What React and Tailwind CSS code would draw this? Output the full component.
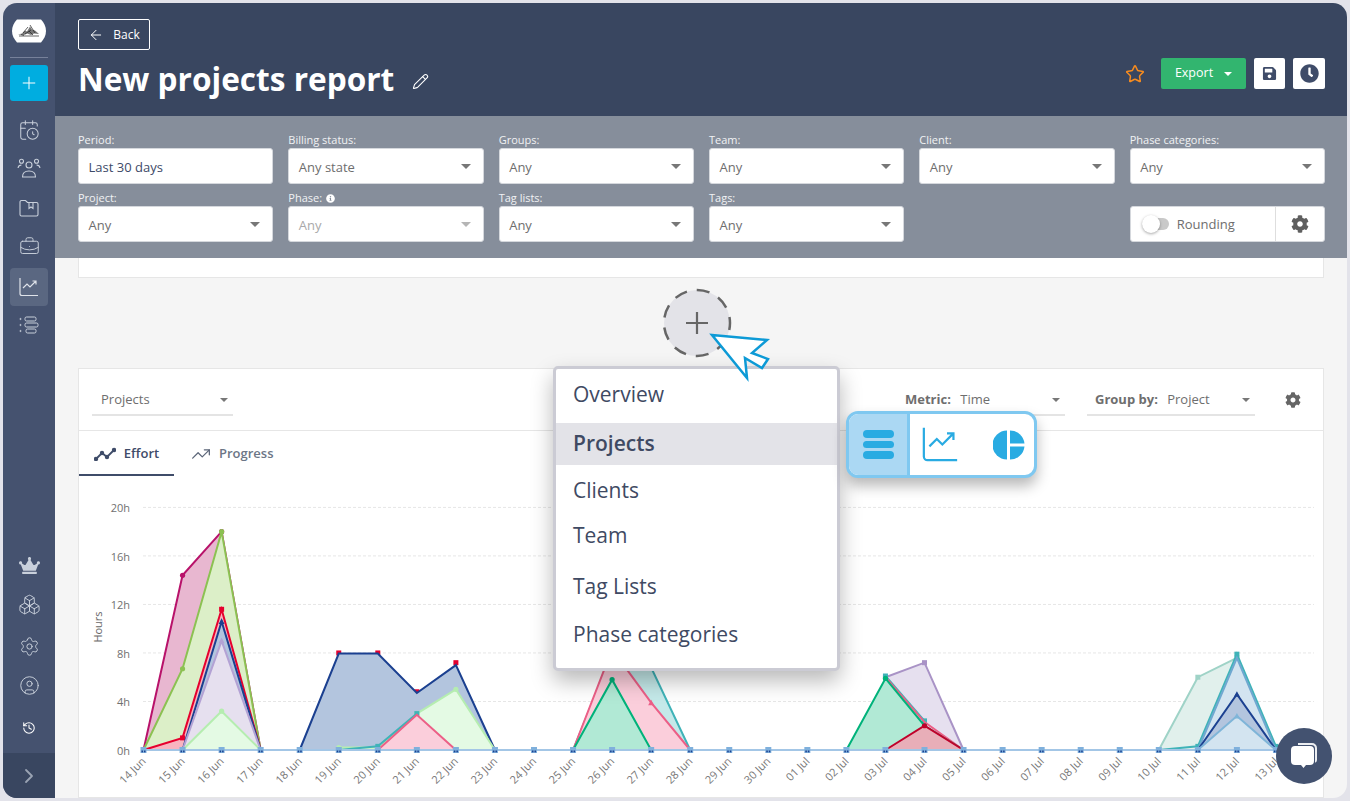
import React from "react";
import {
  ArrowLeft, Plus, Pencil, Star, CalendarClock, BriefcaseBusiness, Boxes, Settings,
  CircleUser, History, ChevronRight, TrendingUp,
} from "lucide-react";
import { FaCog, FaSave, FaClock, FaCrown, FaInfoCircle } from "react-icons/fa";

const dates = [
  "14 Jun", "15 Jun", "16 Jun", "17 Jun", "18 Jun", "19 Jun", "20 Jun", "21 Jun", "22 Jun", "23 Jun",
  "24 Jun", "25 Jun", "26 Jun", "27 Jun", "28 Jun", "29 Jun", "30 Jun", "01 Jul", "02 Jul", "03 Jul",
  "04 Jul", "05 Jul", "06 Jul", "07 Jul", "08 Jul", "09 Jul", "10 Jul", "11 Jul", "12 Jul", "13 Jul",
];

const X = (i) => 143.5 + 39.05 * i;
const Y = (h) => 750 - 12.13 * h;

// line colour, fill, marker, [[day index, hours], ...], marker colour if not the line's
const series = [
  ["#b8126a", "#e8b7d0", "circle", [[0, 0], [1, 14.4], [2, 18], [3, 0]]],
  ["#8cc152", "#dcefc8", "circle", [[0, 0], [1, 6.7], [2, 18], [3, 0]]],
  ["#e6002e", "#f9b5c0", "square", [[0, 0], [1, 1], [2, 11.6], [3, 0]]],
  ["#1b4090", "#b3c5de", "tri", [[1, 0], [2, 10.6], [3, 0]]],
  ["#b3a2d4", "#e6e0ef", "tri", [[1, 0], [2, 9], [3, 0]]],
  ["#b5edb0", "#e4fae4", "circle", [[1, 0], [2, 3.2], [3, 0]]],

  ["none", "none", "square", [[5, 8], [6, 8], [7, 4.8], [8, 7.2]], "#e6002e"],
  ["#1b4090", "#b3c5de", "none", [[4, 0], [5, 7.95], [6, 7.95], [7, 4.7], [8, 7], [9, 0]]],
  ["#b5edb0", "#e4fae4", "circle", [[5, 0.2], [6, 0.2], [7, 3], [8, 5], [9, 0]]],
  ["#3fb3b8", "none", "square", [[5, 0], [6, 0.3], [7, 3]]],
  ["#ec5f87", "#fbcedb", "none", [[6, 0], [7, 2.9], [8, 0]]],

  ["#3fb3b8", "#c4e9e9", "none", [[11, 0], [12, 8], [13, 6.8], [14, 0]]],
  ["#ec5f87", "#fbcedb", "tri", [[11, 0], [12, 8.3], [13, 3.9], [14, 0]]],
  ["#00b27a", "#b1e9d5", "circle", [[11, 0], [12, 5.8], [13, 0]]],

  ["#a993c6", "#e6e0ef", "square", [[19, 6], [20, 7.2], [21, 0]]],
  ["#3fb3b8", "none", "square", [[19, 6.1], [20, 2.4]]],
  ["#ec5f87", "none", "none", [[19, 6], [20, 2.3], [21, 0]]],
  ["#00b27a", "#b1e9d5", "circle", [[18, 0], [19, 5.9], [20, 2], [21, 0]]],
  ["#c0002a", "#e8aeb8", "circle", [[19, 0], [20, 2], [21, 0]]],

  ["#9fd3c7", "#e1f0ec", "square", [[26, 0], [27, 6], [28, 7.6], [29, 0]]],
  ["#3fb3b8", "none", "square", [[26, 0], [27, 0.3], [28, 7.9], [29, 0.3]]],
  ["#6fa8d0", "#d3e4f0", "none", [[27, 0], [28, 7.6], [29, 0]]],
  ["#1b4090", "#b3c5de", "tri", [[27, 0], [28, 4.6], [29, 0]]],
  ["#7fb5d8", "#d3e4f0", "tri", [[27, 0], [28, 2.8], [29, 0]]],
];

const Marker = ({ type, x, y, color }) => {
  if (type === "circle") return <circle cx={x} cy={y} r="2.6" fill={color} />;
  if (type === "square") return <rect x={x - 2.5} y={y - 2.5} width="5" height="5" fill={color} />;
  if (type === "tri") return <path d={`M${x - 3} ${y + 2.5}L${x + 3} ${y + 2.5}L${x} ${y - 3}Z`} fill={color} />;
  return null;
};

const Chart = () => (
  <svg viewBox="79 476 1245 322" className="block w-[1245px] h-[322px]" style={{ fontFamily: "'Open Sans', sans-serif" }}>
    {[0, 4, 8, 12, 16, 20].map((h) => (
      <g key={h}>
        {h > 0 && <line x1="143" x2="1314" y1={Y(h)} y2={Y(h)} stroke="#e6e6e6" strokeDasharray="3 2" />}
        <text x="130" y={Y(h) + 5} textAnchor="end" fontSize="11" fill="#707070">{h}h</text>
      </g>
    ))}
    <text transform="translate(102 627) rotate(-90)" textAnchor="middle" fontSize="11" fill="#666">Hours</text>

    {series.map(([line, fill, marker, pts, markerColor], n) => {
      const d = pts.map(([i, h]) => `${X(i)},${Y(h)}`).join(" ");
      const first = pts[0][0];
      const last = pts[pts.length - 1][0];
      return (
        <g key={n}>
          {fill !== "none" && <polygon points={`${X(first)},${Y(0)} ${d} ${X(last)},${Y(0)}`} fill={fill} />}
          <polyline points={d} fill="none" stroke={line} strokeWidth="2" />
          {pts.filter(([, h]) => h > 0).map(([i, h]) => (
            <Marker key={i} type={marker} x={X(i)} y={Y(h)} color={markerColor || line} />
          ))}
        </g>
      );
    })}

    <line x1={X(0)} x2={X(29)} y1="750" y2="750" stroke="#a3c6e6" strokeWidth="2" />
    {dates.map((d, i) => (
      <g key={d}>
        <rect x={X(i) - 3} y="747" width="6" height="6" fill="#7fb0dc" />
        <rect x={X(i) - 2} y="750.5" width="1.5" height="1.8" fill="#1b4090" />
        <rect x={X(i) + 0.5} y="750.5" width="1.5" height="1.8" fill="#1b4090" />
        <text transform={`translate(${X(i) + 3} 762) rotate(-45)`} textAnchor="end" fontSize="11" fill="#777">{d}</text>
      </g>
    ))}
  </svg>
);

const Caret = ({ className = "border-t-[#777]" }) => (
  <span className={`w-0 h-0 border-x-[5px] border-x-transparent border-t-[5px] ${className}`} />
);

const SmallCaret = () => (
  <span className="w-0 h-0 border-x-[4px] border-x-transparent border-t-[4px] border-t-[#777]" />
);

const Field = ({ label, value, info, disabled, noArrow, blue }) => (
  <div>
    <div className="h-4 text-[11px] leading-4 text-[#f1f2f4] flex items-center gap-1">
      {label}
      {info && <FaInfoCircle className="text-white text-[9px]" />}
    </div>
    <div className="h-9 bg-white rounded-[3px] border border-[#d5d8dd] flex items-center justify-between pl-[9.500px] pr-[12px]">
      <span className={`text-[13px] pt-[3px] ${blue ? "text-[#3d4a68]" : disabled ? "text-[#a9a9a9]" : "text-[#6e6e6e]"}`}>{value}</span>
      {!noArrow && <Caret className={disabled ? "border-t-[#b5b5b5]" : "border-t-[#777]"} />}
    </div>
  </div>
);

const UsersIcon = () => (
  <svg width="24" height="20" viewBox="0 0 24 20" fill="none" stroke="#c9d0db" strokeWidth="1.1">
    <circle cx="12" cy="7" r="3" />
    <circle cx="4.5" cy="3.2" r="2" />
    <circle cx="19.5" cy="3.2" r="2" />
    <path d="M5.5 19c0-4 2.5-6 6.500-6s6.500 2 6.500 6z" />
    <path d="M1 10c.3-2 1.500-3 3.500-3M23 10c-.3-2-1.500-3-3.500-3" />
  </svg>
);

const ProjectsIcon = () => (
  <svg width="20" height="18" viewBox="0 0 20 18" fill="none" stroke="#c9d0db" strokeWidth="1.1">
    <path d="M1 3a1.500 1.500 0 0 1 1.500-1.500h4l2 2h9A1.500 1.500 0 0 1 19 5v10.500a1.500 1.500 0 0 1-1.500 1.500h-15A1.500 1.500 0 0 1 1 15.500z" />
    <path d="M10 3.500v6l2-1.500 2 1.500v-6" />
  </svg>
);

const ReportsIcon = ({ color = "#dfe3ea", size = 20 }) => (
  <svg width={size} height={size} viewBox="0 0 20 20" fill="none" stroke={color} strokeWidth="1.200">
    <path d="M1 1v15.500a2 2 0 0 0 2 2h16" />
    <path d="M4 11l4-4 3 3 6-6M13.500 4H17v3.500" />
  </svg>
);

const PhasesIcon = () => (
  <svg width="20" height="18" viewBox="0 0 20 18" fill="none" stroke="#c9d0db" strokeWidth="1">
    <circle cx="1.500" cy="3" r=".6" />
    <circle cx="1.500" cy="9" r=".6" />
    <circle cx="1.500" cy="15" r=".6" />
    <rect x="6" y="1" width="11" height="4" rx="1.500" />
    <rect x="6" y="7" width="13" height="4" rx="1.500" />
    <rect x="7" y="13" width="10" height="4" rx="1.500" />
  </svg>
);

const Logo = () => (
  <svg width="34" height="24" viewBox="0 0 34 24">
    <path d="M5 0.500h24c3 3 5 7 5 11.500s-2 8-5 11.500H5C2 20 0 16.500 0 12S2 3.500 5 .5z" fill="#fff" />
    <path d="M6 15.500l4-1 3-3 2 1 3-5 2 3 3 1 4 3.500-5-.5-3 1.500-4-1.500-3 1.500z" fill="#777" />
    <path d="M7 17h20M11 14l5-6M18 6l5 8M13 15l6-4M17 12l4 4M9 15.500l3 1" stroke="#222" strokeWidth=".7" fill="none" />
  </svg>
);

const NavItem = ({ children, active }) => (
  <div className={`w-[38px] h-[38px] rounded-[4px] flex items-center justify-center ${active ? "bg-[#5a6781]" : ""}`}>
    {children}
  </div>
);

const Sidebar = () => (
  <aside className="w-[52px] shrink-0 bg-[#45526f] flex flex-col items-center">
    <div className="h-[55px] w-[38px] border-b border-[#77819a] flex items-start justify-center pt-[16px]">
      <Logo />
    </div>
    <div className="mt-[7px] w-[38px] h-[36px] bg-[#00ade0] rounded-[3px] flex items-center justify-center">
      <Plus size={20} strokeWidth={1.2} color="#fff" />
    </div>
    <div className="mt-[10px] flex flex-col">
      <NavItem><CalendarClock size={22} strokeWidth={1.1} color="#c9d0db" /></NavItem>
      <NavItem><UsersIcon /></NavItem>
      <div className="h-[2px]" />
      <NavItem><ProjectsIcon /></NavItem>
      <NavItem><BriefcaseBusiness size={21} strokeWidth={1.1} color="#c9d0db" /></NavItem>
      <div className="h-[3px]" />
      <NavItem active><ReportsIcon /></NavItem>
      <NavItem><PhasesIcon /></NavItem>
    </div>
    <div className="mt-auto flex flex-col items-center">
      <NavItem><FaCrown size={21} color="#c9d0db" /></NavItem>
      <div className="h-[1px]" />
      <NavItem><Boxes size={23} strokeWidth={1} color="#c9d0db" /></NavItem>
      <div className="h-[4px]" />
      <NavItem><Settings size={21} strokeWidth={1.1} color="#c9d0db" /></NavItem>
      <div className="h-[1px]" />
      <NavItem><CircleUser size={21} strokeWidth={1.1} color="#c9d0db" /></NavItem>
      <div className="h-[5px]" />
      <NavItem><History size={14} strokeWidth={1.800} color="#fff" /></NavItem>
      <div className="h-[6px]" />
    </div>
    <div className="w-full h-[45px] bg-[#394660] flex items-center justify-center">
      <ChevronRight size={24} strokeWidth={1.800} color="#9aa3b3" />
    </div>
  </aside>
);

const Header = () => (
  <header className="h-[113px] bg-[#394660] pl-[23px] pr-[22px] pt-[16px] flex justify-between">
    <div>
      <button className="w-[72px] h-[31px] border border-white rounded-[2px] flex items-center justify-center gap-[9px] text-white text-[12px]">
        <ArrowLeft size={16} strokeWidth={1.500} /> Back
      </button>
      <div className="mt-[8px] flex items-center gap-[18px]">
        <h1 className="text-white font-bold text-[31.600px] leading-[42px]">New projects report</h1>
        <Pencil size={17} strokeWidth={1.500} color="#fff" className="mt-[5px]" />
      </div>
    </div>
    <div className="flex items-center gap-2 self-start mt-[39px]">
      <Star size={20} strokeWidth={1.800} color="#f68b1f" className="mr-[8px]" />
      <button className="w-[85px] h-[31px] bg-[#32b56f] rounded-[2px] flex items-center justify-center gap-[11px] text-white text-[12.500px]">
        Export <span className="w-0 h-0 border-x-[4px] border-x-transparent border-t-[4px] border-t-white" />
      </button>
      <button className="w-[31px] h-[31px] bg-white rounded-[2px] flex items-center justify-center">
        <FaSave size={15} color="#3f4c69" />
      </button>
      <button className="w-[32px] h-[31px] bg-white rounded-[2px] flex items-center justify-center">
        <FaClock size={19} color="#3f4c69" />
      </button>
    </div>
  </header>
);

const Filters = () => (
  <section className="h-[142px] bg-[#868e9b] pl-[23px] pr-[22px] pt-[16px] grid grid-cols-6 gap-x-[15px] gap-y-[6px] content-start">
    <Field label="Period:" value="Last 30 days" noArrow blue />
    <Field label="Billing status:" value="Any state" />
    <Field label="Groups:" value="Any" />
    <Field label="Team:" value="Any" />
    <Field label="Client:" value="Any" />
    <Field label="Phase categories:" value="Any" />
    <Field label="Project:" value="Any" />
    <Field label="Phase:" value="Any" info disabled />
    <Field label="Tag lists:" value="Any" />
    <Field label="Tags:" value="Any" />
    <div />
    <div className="pt-4">
      <div className="h-9 bg-white rounded-[3px] border border-[#d5d8dd] flex items-center">
        <div className="flex-1 flex items-center pl-[11px] gap-[8px] h-full">
          <div className="relative w-[27px] h-[12px] bg-[#c9c9c9] rounded-full">
            <div className="absolute left-0 top-[-3px] w-[18px] h-[18px] bg-white rounded-full shadow-[0_1px_3px_rgba(0,0,0,0.35)]" />
          </div>
          <span className="text-[13px] text-[#6e6e6e] pt-[1px]">Rounding</span>
        </div>
        <div className="w-[49px] h-full border-l border-[#dedede] flex items-center justify-center">
          <FaCog size={18} color="#5f5f5f" />
        </div>
      </div>
    </div>
  </section>
);

const Underlined = ({ className, children }) => (
  <div className={`h-[30px] border-b-2 border-[#e4e4e4] flex items-center justify-between text-[13px] text-[#6e6e6e] ${className}`}>
    {children}
  </div>
);

const ReportCard = () => (
  <div className="mx-[23px] mt-[10px] bg-white border border-[#e6e6e6] flex-1 min-h-0 overflow-hidden">
    <div className="h-[62px] border-b border-[#e6e6e6] flex items-center pl-[13px] pr-[22px]">
      <Underlined className="w-[141px] pl-[9px] pr-[5px] mt-[2px]">
        <span className="pt-[1px]">Projects</span> <SmallCaret />
      </Underlined>
      <Underlined className="w-[168px] ml-auto pl-[8px] pr-[5px] mt-[2px]">
        <span><b className="font-bold mr-[6px]">Metric:</b> Time</span> <SmallCaret />
      </Underlined>
      <Underlined className="w-[168px] ml-[22px] pl-[8px] pr-[5px] mt-[2px]">
        <span><b className="font-bold mr-[6px]">Group by:</b> Project</span> <SmallCaret />
      </Underlined>
      <FaCog size={16} color="#666" className="ml-[30px]" />
    </div>
    <div className="h-[45px] flex">
      <div className="w-[95px] pt-[3px] border-b-2 border-[#3f4c69] flex items-center justify-center gap-[8px] text-[13px] font-semibold text-[#3f4c69]">
        <svg width="22" height="14" viewBox="0 0 22 14" fill="none" stroke="#3f4c69" strokeWidth="1.800">
          <path d="M2 12l6-6 5 4 7-7" />
          <circle cx="2" cy="12" r="1.300" fill="#3f4c69" />
          <circle cx="8" cy="6" r="1.300" fill="#3f4c69" />
          <circle cx="13" cy="10" r="1.300" fill="#3f4c69" />
          <circle cx="20" cy="3" r="1.300" fill="#3f4c69" />
        </svg>
        Effort
      </div>
      <div className="ml-[17px] pt-[1px] flex items-center gap-[8px] text-[13px] font-semibold text-[#6c7686]">
        <TrendingUp size={20} strokeWidth={1.500} color="#5b6578" />
        Progress
      </div>
    </div>
    <Chart />
  </div>
);

const menuItems = [
  ["Overview", "h-[54px] pb-[2px]"],
  ["Projects", "h-[42px] bg-[#e3e3e8] font-semibold"],
  ["Clients", "h-[50px] pt-[2px]"],
  ["Team", "h-[42px]"],
  ["Tag Lists", "h-[56px] pt-[4px]"],
  ["Phase categories", "h-[44px]"],
];

const AddMenu = () => (
  <div className="absolute left-[553px] top-[366px] w-[287px] h-[305px] bg-white border-[3px] border-[#cbcbd4] rounded-[5px] shadow-[0_10px_22px_rgba(0,0,0,0.28)] overflow-hidden">
    {menuItems.map(([name, cls]) => (
      <div key={name} className={`px-[17px] flex items-center text-[21px] text-[#3f4a63] ${cls}`}>{name}</div>
    ))}
  </div>
);

const ChartTypePicker = () => (
  <div className="absolute left-[846px] top-[411px] w-[191px] h-[67px] bg-white border-[3px] border-[#7fc8f0] rounded-[12px] shadow-[0_8px_14px_rgba(0,0,0,0.28)] overflow-hidden flex">
    <div className="w-[61px] bg-[#abd8f3] border-r-[3px] border-[#7fc8f0] flex flex-col items-center justify-center gap-[3px]">
      <div className="w-[31px] h-[7.500px] rounded-full bg-[#29abe2]" />
      <div className="w-[31px] h-[7.500px] rounded-full bg-[#29abe2]" />
      <div className="w-[31px] h-[7.500px] rounded-full bg-[#29abe2]" />
    </div>
    <div className="flex-1 flex items-center">
      <div className="ml-[12px]">
        <ReportsIcon color="#29abe2" size={37} />
      </div>
      <svg className="ml-[34px]" width="32" height="30" viewBox="0 0 32 30" fill="#29abe2">
        <path d="M14 0.500v29A14.500 14.500 0 0 1 14 .5z" />
        <path d="M17 .5A14.500 14.500 0 0 1 31.500 13.500H17z" />
        <path d="M17 16.500H31.500A14.500 14.500 0 0 1 17 29.500z" />
      </svg>
    </div>
  </div>
);

export default function App() {
  return (
    <div className="relative w-[1350px] h-[801px] overflow-hidden bg-[#e3e3ea] p-[3px]" style={{ fontFamily: "'Open Sans', sans-serif" }}>
      <div className="h-[795px] w-[1344px] rounded-[14px] overflow-hidden flex">
        <Sidebar />
        <main className="flex-1 min-w-0 flex flex-col bg-[#f5f5f5]">
          <Header />
          <Filters />
          <div className="mx-[23px] h-[20px] bg-white border border-t-0 border-[#e6e6e6]" />
          <div className="mt-[10px] flex justify-center">
            <svg className="mr-[8px]" width="70" height="70" viewBox="0 0 70 70" fill="none">
              <circle cx="35" cy="35" r="33" fill="#e3e3e8" stroke="#666" strokeWidth="2.500" strokeDasharray="13 10" strokeDashoffset="6" />
              <path d="M35 24v22M24 35h22" stroke="#666" strokeWidth="2.200" />
            </svg>
          </div>
          <ReportCard />
        </main>
      </div>

      <AddMenu />
      <ChartTypePicker />

      <svg className="absolute left-[700px] top-[325px]" width="80" height="60" viewBox="700 325 80 60">
        <path d="M712 335L767 340L752 353L768 359L762 368L745 358L747 378Z" fill="#fff" stroke="#0d9ad6" strokeWidth="2.500" strokeLinejoin="miter" />
      </svg>

      <div className="absolute left-[1276px] top-[728px] w-[56px] h-[56px] rounded-full bg-[#435270] flex items-center justify-center">
        <svg width="30" height="30" viewBox="0 0 30 30" fill="#fff">
          <path d="M9 2h14a5 5 0 0 1 5 5v12a3 3 0 0 1-2 2.800V7.500A3.500 3.500 0 0 0 22.500 4H9z" opacity=".9" />
          <path d="M6 5h15a4 4 0 0 1 4 4v11a4 4 0 0 1-4 4h-4l-2.500 3-2.500-3H6a4 4 0 0 1-4-4V9a4 4 0 0 1 4-4z" />
        </svg>
      </div>
    </div>
  );
}
